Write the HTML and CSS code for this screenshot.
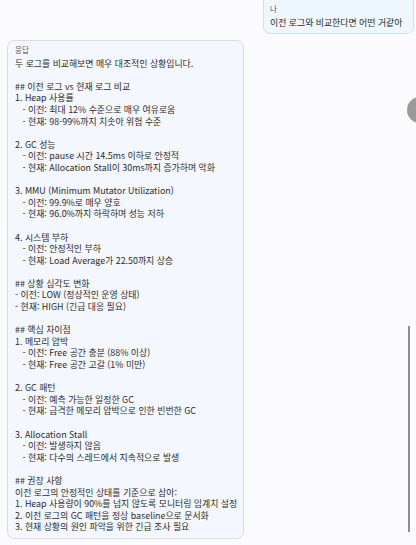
FILE: index.html
```html
<!DOCTYPE html>
<html lang="ko">
<head>
    <meta charset="UTF-8">
    <title>로그 비교</title>
    <link rel="stylesheet" href="styles.css">
</head>
<body>
    <div class="chat">
        <div class="msg user">
            <div class="msg-label">나</div>
            <div class="msg-text">이전 로그와 비교한다면 어떤 거같아</div>
        </div>

        <div class="msg bot">
            <div class="msg-label">응답</div>
<div class="msg-text">두 로그를 비교해보면 매우 대조적인 상황입니다.

## 이전 로그 vs 현재 로그 비교
1. Heap 사용률
   - 이전: 최대 12% 수준으로 매우 여유로움
   - 현재: 98-99%까지 치솟아 위험 수준

2. GC 성능
   - 이전: pause 시간 14.5ms 이하로 안정적
   - 현재: Allocation Stall이 30ms까지 증가하며 악화

3. MMU (Minimum Mutator Utilization)
   - 이전: 99.9%로 매우 양호
   - 현재: 96.0%까지 하락하며 성능 저하

4. 시스템 부하
   - 이전: 안정적인 부하
   - 현재: Load Average가 22.50까지 상승

## 상황 심각도 변화
- 이전: LOW (정상적인 운영 상태)
- 현재: HIGH (긴급 대응 필요)

## 핵심 차이점
1. 메모리 압박
   - 이전: Free 공간 충분 (88% 이상)
   - 현재: Free 공간 고갈 (1% 미만)

2. GC 패턴
   - 이전: 예측 가능한 일정한 GC
   - 현재: 급격한 메모리 압박으로 인한 빈번한 GC

3. Allocation Stall
   - 이전: 발생하지 않음
   - 현재: 다수의 스레드에서 지속적으로 발생

## 권장 사항
이전 로그의 안정적인 상태를 기준으로 삼아:
1. Heap 사용량이 90%를 넘지 않도록 모니터링 임계치 설정
2. 이전 로그의 GC 패턴을 정상 baseline으로 문서화
3. 현재 상황의 원인 파악을 위한 긴급 조사 필요</div>
        </div>
    </div>

    <!-- 오른쪽 가장자리 장식 -->
    <div class="side-knob"></div>
    <div class="scroll-thumb"></div>
</body>
</html>
```

FILE: styles.css
```css
html, body {
    margin: 0;
    padding: 0;
    height: 100%;
    overflow: hidden;
}
body {
    background: #fbfbfd;
    font-family: 'Noto Sans CJK KR', 'Noto Sans', sans-serif;
    color: #2b2b2b;
    position: relative;
}
.chat {
    display: flex;
    flex-direction: column;
    padding: 0 4px 0 7px;
}
.msg {
    border-radius: 7px;
    box-sizing: border-box;
}
.msg-label {
    font-size: 7.5px;
    color: #555;
    line-height: 10px;
}
.msg-text {
    font-size: 8.9px;
    line-height: 11.6px;
    white-space: pre;
}
.user {
    align-self: flex-end;
    width: 151px;
    margin-top: -8px;
    margin-right: -2px;
    padding: 11px 6px 4px 6px;
    background: #eef6fe;
    border: 1px solid #cde2f7;
}
.user .msg-label {
    margin-bottom: 3px;
}
.bot {
    width: 237px;
    margin-top: 6px;
    padding: 4px 4px 5px 7px;
    background: #f4f7fd;
    border: 1px solid #d6dce9;
}
.bot .msg-label {
    margin-bottom: 3px;
}
.side-knob {
    position: absolute;
    left: 407px;
    top: 97px;
    width: 26px;
    height: 26px;
    border-radius: 50%;
    background: #9a9a9a;
}
.scroll-thumb {
    position: absolute;
    left: 408px;
    top: 326px;
    width: 2px;
    height: 206px;
    background: #8e8e8e;
}
```
